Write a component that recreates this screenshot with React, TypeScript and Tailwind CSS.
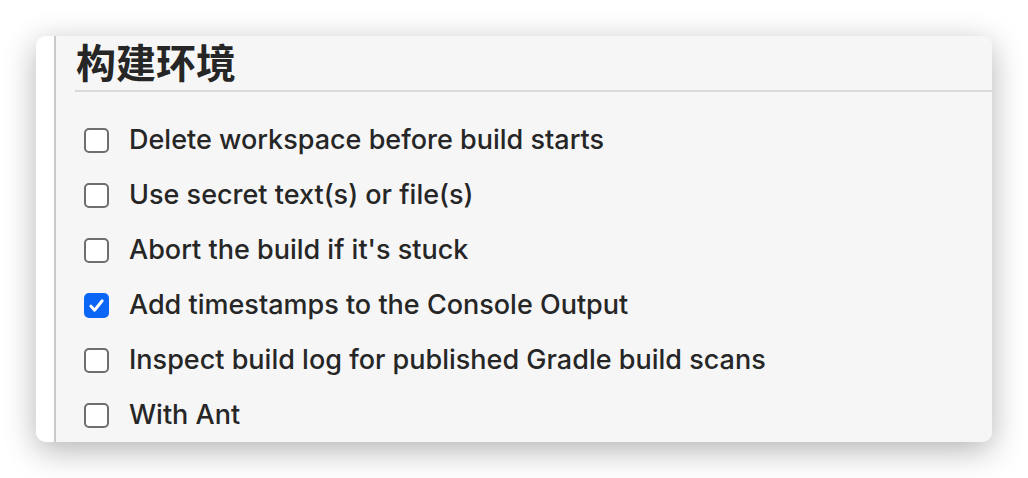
import { useState } from 'react';

const options = [
  { label: 'Delete workspace before build starts', checked: false },
  { label: 'Use secret text(s) or file(s)', checked: false },
  { label: "Abort the build if it's stuck", checked: false },
  { label: 'Add timestamps to the Console Output', checked: true },
  { label: 'Inspect build log for published Gradle build scans', checked: false },
  { label: 'With Ant', checked: false },
];

export default function App() {
  return (
    <div className="w-[1028px] h-[478px] bg-white pt-[36px] pl-[36px]">
      {/* Window */}
      <div className="w-[956px] h-[406px] flex rounded-[10px] bg-white shadow-[0_8px_32px_rgba(0,0,0,0.3)]">
        <div className="w-[18px] bg-white rounded-l-[10px]" />
        <div className="flex-1 bg-[#f6f6f6] border-l-2 border-[#c9c9c9] pl-[19px] rounded-r-[10px]">
          <h2 className="pl-[1px] text-[40px] leading-[58px] -mb-[4px] -translate-y-[4px] font-bold text-[#262626] font-['Noto_Sans_CJK_SC',sans-serif]">
            构建环境
          </h2>
          <div className="h-[2px] bg-[#dadada]" />
          <div className="pt-[21px] pl-[9px] flex flex-col">
            {options.map((o) => (
              <OptionRow key={o.label} label={o.label} defaultChecked={o.checked} />
            ))}
          </div>
        </div>
      </div>
    </div>
  );
}

function OptionRow({ label, defaultChecked }: { label: string; defaultChecked: boolean }) {
  const [checked, setChecked] = useState(defaultChecked);
  return (
    <label className="flex items-center h-[55px] cursor-pointer" onClick={() => setChecked(!checked)}>
      {checked ? (
        <span className="w-[25px] h-[25px] rounded-[5px] bg-[#0c66f5] flex items-center justify-center">
          <svg width="19" height="19" viewBox="0 0 20 20" fill="none">
            <path d="M4 10.5l4 4.5 8-10" stroke="white" strokeWidth="3" strokeLinecap="round" strokeLinejoin="round" />
          </svg>
        </span>
      ) : (
        <span className="w-[25px] h-[25px] rounded-[5px] border-2 border-[#6e6e6e] bg-white" />
      )}
      <span className="ml-[20px] text-[27px] font-medium text-[#262626] font-['Inter',sans-serif]">
        {label}
      </span>
    </label>
  );
}
